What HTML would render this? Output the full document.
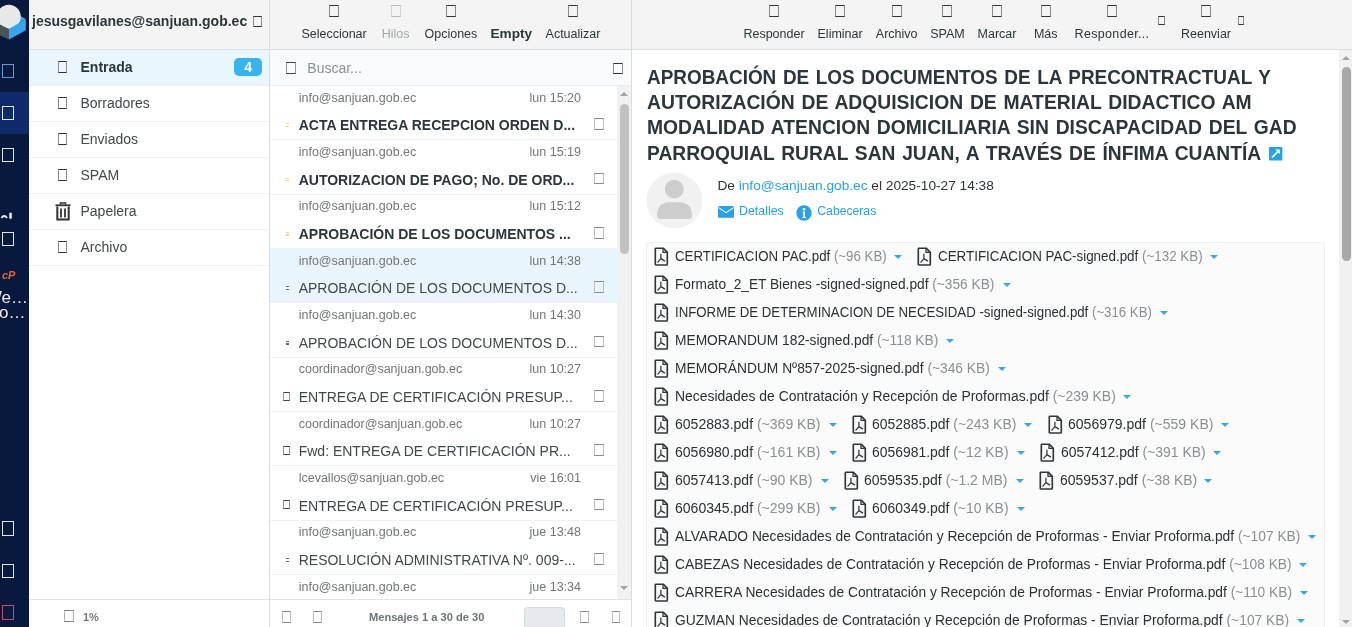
<!DOCTYPE html>
<html><head><meta charset="utf-8"><title>Roundcube</title>
<style>
*{box-sizing:border-box;margin:0;padding:0}
html,body{width:1352px;height:627px;overflow:hidden;background:#fff;font-family:"Liberation Sans",sans-serif;color:#2c363a}
.a{position:absolute}
.t{position:absolute;white-space:nowrap;line-height:0}
body{will-change:transform}
</style></head><body>
<div class="a" style="left:0px;top:0px;width:29px;height:627px;background:#09193d;"></div>
<div class="a" style="left:0px;top:92px;width:29px;height:42px;background:#0f2a6a;"></div>
<svg class="a" style="left:0;top:0" width="29" height="44" viewBox="0 0 29 44">
<polygon points="0,24.4 19.5,15.5 25.8,19 8.8,29" fill="#37a6ee"/>
<circle cx="8.8" cy="16.8" r="12" fill="#e8e8e8"/>
<polygon points="-1,24 8.8,29 9,39.5 -1,35" fill="#4b5456"/>
<polygon points="8.8,29 25.8,19 25.8,30.2 9,39.5" fill="#37a6ee"/>
</svg>
<div class="a" style="left:2.4px;top:64px;width:11.6px;height:14px;border:1.5px solid #5f9bd0;border-left-color:#5f9bd0;border-right-color:#5f9bd0;"></div>
<div class="a" style="left:2.4px;top:106px;width:11.6px;height:14px;border:1.5px solid #dfe6ee;border-left-color:#dfe6ee;border-right-color:#dfe6ee;"></div>
<div class="a" style="left:2.4px;top:148px;width:11.6px;height:14px;border:1.5px solid #dfe6ee;border-left-color:#dfe6ee;border-right-color:#dfe6ee;"></div>
<div class="a" style="left:2.4px;top:232px;width:11.6px;height:14px;border:1.5px solid #dfe6ee;border-left-color:#dfe6ee;border-right-color:#dfe6ee;"></div>
<div class="a" style="left:2.4px;top:521px;width:11.6px;height:15px;border:1.5px solid #dfe6ee;border-left-color:#dfe6ee;border-right-color:#dfe6ee;"></div>
<div class="a" style="left:2.4px;top:564px;width:11.6px;height:14px;border:1.5px solid #dfe6ee;border-left-color:#dfe6ee;border-right-color:#dfe6ee;"></div>
<div class="a" style="left:2.4px;top:605px;width:11.6px;height:15px;border:1.5px solid #c0506a;border-left-color:#c0506a;border-right-color:#c0506a;"></div>
<svg class="a" style="left:0;top:210px" width="16" height="12" viewBox="0 210 16 12"><path d="M1.5,218 Q4.2,214.2 7,218" fill="none" stroke="#eef" stroke-width="2"/><rect x="9.3" y="212.8" width="2.5" height="5.9" fill="#eef"/></svg>
<div class="t" style="left:2px;top:275.0px;font-size:11px;color:#e8662e;font-weight:bold;"><i>cP</i></div>
<div class="t" style="left:-14.2px;top:298.0px;font-size:17px;color:#f0f0f0;">We…</div>
<div class="t" style="left:-1px;top:312.5px;font-size:17px;color:#f0f0f0;">o…</div>
<div class="a" style="left:29px;top:0px;width:240px;height:49px;background:#f4f4f4;"></div>
<div class="a" style="left:29px;top:49px;width:240px;height:1px;background:#d6dde0;"></div>
<div class="t" style="left:32px;top:21.0px;font-size:14px;color:#2c363a;font-weight:bold;">jesusgavilanes@sanjuan.gob.ec</div>
<div class="a" style="left:252.6px;top:15.7px;width:9.200000000000017px;height:11.100000000000001px;border:1.4px solid #333;border-left-color:#8a8a8a;border-right-color:#8a8a8a;"></div>
<div class="a" style="left:29px;top:50px;width:240px;height:35px;background:#eaf6fd;"></div>
<div class="a" style="left:29px;top:84.5px;width:240px;height:1.0px;background:#eef1f2;"></div>
<div class="a" style="left:58px;top:61.2px;width:8.799999999999997px;height:11.700000000000003px;border:1.4px solid #333;border-left-color:#8f8f8f;border-right-color:#8f8f8f;"></div>
<div class="t" style="left:80.5px;top:67.0px;font-size:14px;color:#2c363a;font-weight:bold;">Entrada</div>
<div class="a" style="left:29px;top:120.5px;width:240px;height:1.0px;background:#eef1f2;"></div>
<div class="a" style="left:58px;top:97.2px;width:8.799999999999997px;height:11.700000000000003px;border:1.4px solid #333;border-left-color:#8f8f8f;border-right-color:#8f8f8f;"></div>
<div class="t" style="left:80.5px;top:103.0px;font-size:14px;color:#41484b;">Borradores</div>
<div class="a" style="left:29px;top:156.5px;width:240px;height:1.0px;background:#eef1f2;"></div>
<div class="a" style="left:58px;top:133.2px;width:8.799999999999997px;height:11.700000000000017px;border:1.4px solid #333;border-left-color:#8f8f8f;border-right-color:#8f8f8f;"></div>
<div class="t" style="left:80.5px;top:139.0px;font-size:14px;color:#41484b;">Enviados</div>
<div class="a" style="left:29px;top:192.5px;width:240px;height:1.0px;background:#eef1f2;"></div>
<div class="a" style="left:58px;top:169.2px;width:8.799999999999997px;height:11.700000000000017px;border:1.4px solid #333;border-left-color:#8f8f8f;border-right-color:#8f8f8f;"></div>
<div class="t" style="left:80.5px;top:175.0px;font-size:14px;color:#41484b;">SPAM</div>
<div class="a" style="left:29px;top:228.5px;width:240px;height:1.0px;background:#eef1f2;"></div>
<svg class="a" style="left:55px;top:202px" width="16" height="19" viewBox="0 0 16 19">
<path d="M5.5,2.5 V1 H10.5 V2.5" fill="none" stroke="#333" stroke-width="1.6"/>
<path d="M0.5,3.3 H15.5" stroke="#333" stroke-width="1.8"/>
<path d="M2.3,4.5 V17.6 H13.7 V4.5" fill="none" stroke="#333" stroke-width="2"/>
<path d="M6,6.5 V15.5 M10,6.5 V15.5" stroke="#333" stroke-width="1.8"/>
</svg>
<div class="t" style="left:80.5px;top:211.0px;font-size:14px;color:#41484b;">Papelera</div>
<div class="a" style="left:29px;top:264.5px;width:240px;height:1.0px;background:#eef1f2;"></div>
<div class="a" style="left:58px;top:241.2px;width:8.799999999999997px;height:11.700000000000017px;border:1.4px solid #333;border-left-color:#8f8f8f;border-right-color:#8f8f8f;"></div>
<div class="t" style="left:80.5px;top:247.0px;font-size:14px;color:#41484b;">Archivo</div>
<div class="a" style="left:234.3px;top:58.3px;width:27.399999999999977px;height:18.200000000000003px;background:#37b4ea;border-radius:5px"></div>
<div class="t" style="left:98.19999999999999px;width:300px;text-align:center;top:67.3px;font-size:14px;color:#fff;font-weight:bold;">4</div>
<div class="a" style="left:29px;top:599px;width:240px;height:1px;background:#dfe3e5;"></div>
<div class="a" style="left:64px;top:610px;width:9.5px;height:11.799999999999955px;border:1.3px solid #777;border-left-color:#b4b4b4;border-right-color:#b4b4b4;"></div>
<div class="t" style="left:83px;top:617.0px;font-size:11px;color:#777;font-weight:bold;">1%</div>
<div class="a" style="left:269px;top:0px;width:1px;height:627px;background:#dcdcdc;"></div>
<div class="a" style="left:270px;top:0px;width:361px;height:49px;background:#f4f4f4;"></div>
<div class="a" style="left:270px;top:49px;width:361px;height:1px;background:#d6dde0;"></div>
<div class="a" style="left:329.1px;top:5.2px;width:10.0px;height:11.400000000000002px;border:1.4px solid #333;border-left-color:#8a8a8a;border-right-color:#8a8a8a;"></div>
<div class="t" style="left:184.10000000000002px;width:300px;text-align:center;top:33.7px;font-size:12.5px;color:#2c363a;">Seleccionar</div>
<div class="a" style="left:390.7px;top:5.2px;width:10.0px;height:11.400000000000002px;border:1.4px solid #b5b9bb;border-left-color:#d1d4d5;border-right-color:#d1d4d5;"></div>
<div class="t" style="left:245.7px;width:300px;text-align:center;top:33.7px;font-size:12.5px;color:#a3a9ab;">Hilos</div>
<div class="a" style="left:445.9px;top:5.2px;width:10.0px;height:11.400000000000002px;border:1.4px solid #333;border-left-color:#8a8a8a;border-right-color:#8a8a8a;"></div>
<div class="t" style="left:300.9px;width:300px;text-align:center;top:33.7px;font-size:12.5px;color:#2c363a;">Opciones</div>
<div class="t" style="left:361.3px;width:300px;text-align:center;top:34.2px;font-size:13.6px;color:#2c363a;font-weight:bold;">Empty</div>
<div class="a" style="left:568px;top:5.2px;width:10px;height:11.400000000000002px;border:1.4px solid #333;border-left-color:#8a8a8a;border-right-color:#8a8a8a;"></div>
<div class="t" style="left:423px;width:300px;text-align:center;top:33.7px;font-size:12.5px;color:#2c363a;">Actualizar</div>
<div class="a" style="left:270px;top:50px;width:361px;height:35px;background:#f9fafb;"></div>
<div class="a" style="left:270px;top:85px;width:361px;height:1px;background:#e9edef;"></div>
<div class="a" style="left:286px;top:62.2px;width:9.5px;height:11.5px;border:1.4px solid #444;border-left-color:#959696;border-right-color:#959696;"></div>
<div class="t" style="left:307.3px;top:68.0px;font-size:14px;color:#8a9195;">Buscar...</div>
<div class="a" style="left:612.8px;top:63.2px;width:10.100000000000023px;height:10.899999999999991px;border:1.4px solid #333;border-left-color:#8c8d8d;border-right-color:#8c8d8d;"></div>
<div class="a" style="left:270px;top:139.2px;width:347px;height:1.0px;background:#eef1f2;"></div>
<div class="t" style="left:298.7px;top:97.67px;font-size:12.5px;color:#737677;">info@sanjuan.gob.ec</div>
<div class="t" style="left:-19px;width:600px;text-align:right;top:97.67px;font-size:12.5px;color:#737677;">lun 15:20</div>
<div class="t" style="left:298.7px;top:125.37px;font-size:14px;color:#2c363a;font-weight:bold;">ACTA ENTREGA RECEPCION ORDEN D...</div>
<div class="a" style="left:594.3px;top:118.27000000000001px;width:9.5px;height:11.799999999999983px;border:1.3px solid #888;border-left-color:#bebebe;border-right-color:#bebebe;"></div>
<div class="a" style="left:285.6px;top:123.17px;width:3.8999999999999773px;height:1.1000000000000085px;background:#efd48a;"></div>
<div class="a" style="left:285.6px;top:125.77000000000001px;width:3.8999999999999773px;height:1.0999999999999943px;background:#efd48a;"></div>
<div class="a" style="left:270px;top:193.52999999999997px;width:347px;height:1.0px;background:#eef1f2;"></div>
<div class="t" style="left:298.7px;top:152.0px;font-size:12.5px;color:#737677;">info@sanjuan.gob.ec</div>
<div class="t" style="left:-19px;width:600px;text-align:right;top:152.0px;font-size:12.5px;color:#737677;">lun 15:19</div>
<div class="t" style="left:298.7px;top:179.7px;font-size:14px;color:#2c363a;font-weight:bold;">AUTORIZACION DE PAGO; No. DE ORD...</div>
<div class="a" style="left:594.3px;top:172.6px;width:9.5px;height:11.799999999999983px;border:1.3px solid #888;border-left-color:#bebebe;border-right-color:#bebebe;"></div>
<div class="a" style="left:285.6px;top:177.5px;width:3.8999999999999773px;height:1.0999999999999943px;background:#efd48a;"></div>
<div class="a" style="left:285.6px;top:180.1px;width:3.8999999999999773px;height:1.0999999999999943px;background:#efd48a;"></div>
<div class="a" style="left:270px;top:247.86px;width:347px;height:1.0px;background:#eef1f2;"></div>
<div class="t" style="left:298.7px;top:206.33px;font-size:12.5px;color:#737677;">info@sanjuan.gob.ec</div>
<div class="t" style="left:-19px;width:600px;text-align:right;top:206.33px;font-size:12.5px;color:#737677;">lun 15:12</div>
<div class="t" style="left:298.7px;top:234.03px;font-size:14px;color:#2c363a;font-weight:bold;">APROBACIÓN DE LOS DOCUMENTOS ...</div>
<div class="a" style="left:594.3px;top:226.93px;width:9.5px;height:11.800000000000011px;border:1.3px solid #888;border-left-color:#bebebe;border-right-color:#bebebe;"></div>
<div class="a" style="left:285.6px;top:231.82999999999998px;width:3.8999999999999773px;height:1.1000000000000227px;background:#efd48a;"></div>
<div class="a" style="left:285.6px;top:234.43px;width:3.8999999999999773px;height:1.0999999999999943px;background:#efd48a;"></div>
<div class="a" style="left:270px;top:248.36px;width:347px;height:54.329999999999984px;background:#e9f5fc;"></div>
<div class="a" style="left:270px;top:302.19px;width:347px;height:1.0px;background:#eef1f2;"></div>
<div class="t" style="left:298.7px;top:260.66px;font-size:12.5px;color:#737677;">info@sanjuan.gob.ec</div>
<div class="t" style="left:-19px;width:600px;text-align:right;top:260.66px;font-size:12.5px;color:#737677;">lun 14:38</div>
<div class="t" style="left:298.7px;top:288.36px;font-size:14px;color:#41484b;">APROBACIÓN DE LOS DOCUMENTOS D...</div>
<div class="a" style="left:594.3px;top:281.26px;width:9.5px;height:11.800000000000011px;border:1.3px solid #888;border-left-color:#bebebe;border-right-color:#bebebe;"></div>
<div class="a" style="left:285.9px;top:286.26px;width:3.400000000000034px;height:1.2000000000000455px;background:#666;"></div>
<div class="a" style="left:285.9px;top:289.06px;width:3.400000000000034px;height:1.1999999999999886px;background:#666;"></div>
<div class="a" style="left:270px;top:356.52px;width:347px;height:1.0px;background:#eef1f2;"></div>
<div class="t" style="left:298.7px;top:314.99px;font-size:12.5px;color:#737677;">info@sanjuan.gob.ec</div>
<div class="t" style="left:-19px;width:600px;text-align:right;top:314.99px;font-size:12.5px;color:#737677;">lun 14:30</div>
<div class="t" style="left:298.7px;top:342.69px;font-size:14px;color:#41484b;">APROBACIÓN DE LOS DOCUMENTOS D...</div>
<div class="a" style="left:594.3px;top:335.59px;width:9.5px;height:11.800000000000011px;border:1.3px solid #888;border-left-color:#bebebe;border-right-color:#bebebe;"></div>
<div class="a" style="left:285.9px;top:340.59px;width:3.400000000000034px;height:1.2000000000000455px;background:#666;"></div>
<div class="a" style="left:285.9px;top:343.39px;width:3.400000000000034px;height:1.1999999999999886px;background:#666;"></div>
<div class="a" style="left:270px;top:410.84999999999997px;width:347px;height:1.0px;background:#eef1f2;"></div>
<div class="t" style="left:298.7px;top:369.32px;font-size:12.5px;color:#737677;">coordinador@sanjuan.gob.ec</div>
<div class="t" style="left:-19px;width:600px;text-align:right;top:369.32px;font-size:12.5px;color:#737677;">lun 10:27</div>
<div class="t" style="left:298.7px;top:397.02px;font-size:14px;color:#41484b;">ENTREGA DE CERTIFICACIÓN PRESUP...</div>
<div class="a" style="left:594.3px;top:389.91999999999996px;width:9.5px;height:11.800000000000011px;border:1.3px solid #888;border-left-color:#bebebe;border-right-color:#bebebe;"></div>
<div class="a" style="left:283px;top:391.52px;width:7.399999999999977px;height:9.0px;border:1.2px solid #444;border-left-color:#989898;border-right-color:#989898;"></div>
<div class="a" style="left:270px;top:465.18px;width:347px;height:1.0px;background:#eef1f2;"></div>
<div class="t" style="left:298.7px;top:423.65000000000003px;font-size:12.5px;color:#737677;">coordinador@sanjuan.gob.ec</div>
<div class="t" style="left:-19px;width:600px;text-align:right;top:423.65000000000003px;font-size:12.5px;color:#737677;">lun 10:27</div>
<div class="t" style="left:298.7px;top:451.35px;font-size:14px;color:#41484b;">Fwd: ENTREGA DE CERTIFICACIÓN PR...</div>
<div class="a" style="left:594.3px;top:444.25px;width:9.5px;height:11.800000000000011px;border:1.3px solid #888;border-left-color:#bebebe;border-right-color:#bebebe;"></div>
<div class="a" style="left:283px;top:445.85px;width:7.399999999999977px;height:9.0px;border:1.2px solid #444;border-left-color:#989898;border-right-color:#989898;"></div>
<div class="a" style="left:270px;top:519.51px;width:347px;height:1.0px;background:#eef1f2;"></div>
<div class="t" style="left:298.7px;top:477.98px;font-size:12.5px;color:#737677;">lcevallos@sanjuan.gob.ec</div>
<div class="t" style="left:-19px;width:600px;text-align:right;top:477.98px;font-size:12.5px;color:#737677;">vie 16:01</div>
<div class="t" style="left:298.7px;top:505.68px;font-size:14px;color:#41484b;">ENTREGA DE CERTIFICACIÓN PRESUP...</div>
<div class="a" style="left:594.3px;top:498.58px;width:9.5px;height:11.800000000000011px;border:1.3px solid #888;border-left-color:#bebebe;border-right-color:#bebebe;"></div>
<div class="a" style="left:283px;top:500.18px;width:7.399999999999977px;height:9.0px;border:1.2px solid #444;border-left-color:#989898;border-right-color:#989898;"></div>
<div class="a" style="left:270px;top:573.84px;width:347px;height:1.0px;background:#eef1f2;"></div>
<div class="t" style="left:298.7px;top:532.31px;font-size:12.5px;color:#737677;">info@sanjuan.gob.ec</div>
<div class="t" style="left:-19px;width:600px;text-align:right;top:532.31px;font-size:12.5px;color:#737677;">jue 13:48</div>
<div class="t" style="left:298.7px;top:560.01px;font-size:14px;color:#41484b;">RESOLUCIÓN ADMINISTRATIVA Nº. 009-...</div>
<div class="a" style="left:594.3px;top:552.91px;width:9.5px;height:11.800000000000068px;border:1.3px solid #888;border-left-color:#bebebe;border-right-color:#bebebe;"></div>
<div class="a" style="left:285.9px;top:557.91px;width:3.400000000000034px;height:1.2000000000000455px;background:#666;"></div>
<div class="a" style="left:285.9px;top:560.71px;width:3.400000000000034px;height:1.1999999999999318px;background:#666;"></div>
<div class="a" style="left:270px;top:628.17px;width:347px;height:1.0px;background:#eef1f2;"></div>
<div class="t" style="left:298.7px;top:586.6399999999999px;font-size:12.5px;color:#737677;">info@sanjuan.gob.ec</div>
<div class="t" style="left:-19px;width:600px;text-align:right;top:586.6399999999999px;font-size:12.5px;color:#737677;">jue 13:34</div>
<div class="a" style="left:617px;top:86px;width:14px;height:513px;background:#f1f1f1;"></div>
<div class="a" style="left:619.8px;top:104px;width:8.900000000000091px;height:150px;background:#c1c1c1;border-radius:5px"></div>
<svg class="a" style="left:619px;top:90px" width="10" height="8"><polygon points="1,6 5,2 9,6" fill="#a3a3a3"/></svg>
<svg class="a" style="left:619px;top:584px" width="10" height="8"><polygon points="1,2 5,6 9,2" fill="#a3a3a3"/></svg>
<div class="a" style="left:270px;top:599px;width:361px;height:1px;background:#dfe3e5;"></div>
<div class="a" style="left:270px;top:600px;width:361px;height:27px;background:#fff;"></div>
<div class="a" style="left:282.3px;top:611.1px;width:8.699999999999989px;height:11.799999999999955px;border:1.3px solid #888;border-left-color:#bebebe;border-right-color:#bebebe;"></div>
<div class="a" style="left:313.2px;top:611.1px;width:8.800000000000011px;height:11.799999999999955px;border:1.3px solid #888;border-left-color:#bebebe;border-right-color:#bebebe;"></div>
<div class="t" style="left:369px;top:617.0px;font-size:11.1px;color:#6c7478;font-weight:bold;">Mensajes 1 a 30 de 30</div>
<div class="a" style="left:524px;top:606.5px;width:41px;height:23.5px;background:#e6eaed;border:1px solid #d5dadd;border-radius:4px"></div>
<div class="a" style="left:580px;top:611.1px;width:8.799999999999955px;height:11.799999999999955px;border:1.3px solid #888;border-left-color:#bebebe;border-right-color:#bebebe;"></div>
<div class="a" style="left:611.5px;top:611.1px;width:8.799999999999955px;height:11.799999999999955px;border:1.3px solid #888;border-left-color:#bebebe;border-right-color:#bebebe;"></div>
<div class="a" style="left:631px;top:0px;width:1px;height:627px;background:#dcdcdc;"></div>
<div class="a" style="left:632px;top:0px;width:720px;height:49px;background:#f4f4f4;"></div>
<div class="a" style="left:632px;top:49px;width:720px;height:1px;background:#d6dde0;"></div>
<div class="a" style="left:769px;top:5.2px;width:10px;height:11.400000000000002px;border:1.4px solid #333;border-left-color:#8a8a8a;border-right-color:#8a8a8a;"></div>
<div class="t" style="left:624px;width:300px;text-align:center;top:33.7px;font-size:12.5px;color:#2c363a;">Responder</div>
<div class="a" style="left:835.1px;top:5.2px;width:10.0px;height:11.400000000000002px;border:1.4px solid #333;border-left-color:#8a8a8a;border-right-color:#8a8a8a;"></div>
<div class="t" style="left:690.1px;width:300px;text-align:center;top:33.7px;font-size:12.5px;color:#2c363a;">Eliminar</div>
<div class="a" style="left:891.7px;top:5.2px;width:10.0px;height:11.400000000000002px;border:1.4px solid #333;border-left-color:#8a8a8a;border-right-color:#8a8a8a;"></div>
<div class="t" style="left:746.7px;width:300px;text-align:center;top:33.7px;font-size:12.5px;color:#2c363a;">Archivo</div>
<div class="a" style="left:942.4px;top:5.2px;width:10.0px;height:11.400000000000002px;border:1.4px solid #333;border-left-color:#8a8a8a;border-right-color:#8a8a8a;"></div>
<div class="t" style="left:797.4px;width:300px;text-align:center;top:33.7px;font-size:12.5px;color:#2c363a;">SPAM</div>
<div class="a" style="left:992px;top:5.2px;width:10px;height:11.400000000000002px;border:1.4px solid #333;border-left-color:#8a8a8a;border-right-color:#8a8a8a;"></div>
<div class="t" style="left:847px;width:300px;text-align:center;top:33.7px;font-size:12.5px;color:#2c363a;">Marcar</div>
<div class="a" style="left:1040.7px;top:5.2px;width:10.0px;height:11.400000000000002px;border:1.4px solid #333;border-left-color:#8a8a8a;border-right-color:#8a8a8a;"></div>
<div class="t" style="left:895.7px;width:300px;text-align:center;top:33.7px;font-size:12.5px;color:#2c363a;">Más</div>
<div class="a" style="left:1107px;top:5.2px;width:10px;height:11.400000000000002px;border:1.4px solid #333;border-left-color:#8a8a8a;border-right-color:#8a8a8a;"></div>
<div class="t" style="left:962px;width:300px;text-align:center;top:33.7px;font-size:12.5px;color:#2c363a;letter-spacing:0.33px">Responder...</div>
<div class="a" style="left:1201px;top:5.2px;width:10px;height:11.400000000000002px;border:1.4px solid #333;border-left-color:#8a8a8a;border-right-color:#8a8a8a;"></div>
<div class="t" style="left:1056px;width:300px;text-align:center;top:33.7px;font-size:12.5px;color:#2c363a;">Reenviar</div>
<div class="a" style="left:1158px;top:16px;width:6.7000000000000455px;height:8.5px;border:1.3px solid #333;border-left-color:#8a8a8a;border-right-color:#8a8a8a;"></div>
<div class="a" style="left:1237.5px;top:16px;width:6.2000000000000455px;height:8.5px;border:1.3px solid #333;border-left-color:#8a8a8a;border-right-color:#8a8a8a;"></div>
<div class="t" style="left:646.8px;top:76.5px;font-size:20.5px;color:#2c363a;font-weight:bold;word-spacing:1.5px;transform:scaleX(0.9227);transform-origin:0 0">APROBACIÓN DE LOS DOCUMENTOS DE LA PRECONTRACTUAL Y</div>
<div class="t" style="left:646.8px;top:101.5px;font-size:20.5px;color:#2c363a;font-weight:bold;word-spacing:1.5px;transform:scaleX(0.9421);transform-origin:0 0">AUTORIZACIÓN DE ADQUISICION DE MATERIAL DIDACTICO AM</div>
<div class="t" style="left:646.8px;top:126.5px;font-size:20.5px;color:#2c363a;font-weight:bold;word-spacing:1.5px;transform:scaleX(0.9403);transform-origin:0 0">MODALIDAD ATENCION DOMICILIARIA SIN DISCAPACIDAD DEL GAD</div>
<div class="t" style="left:646.8px;top:152.5px;font-size:20.5px;color:#2c363a;font-weight:bold;word-spacing:1.5px;transform:scaleX(0.9375);transform-origin:0 0">PARROQUIAL RURAL SAN JUAN, A TRAVÉS DE ÍNFIMA CUANTÍA</div>
<svg class="a" style="left:1269.3px;top:147.3px" width="13.4" height="13.5" viewBox="0 0 13.4 13.5">
<rect x="0" y="0" width="13.4" height="13.5" rx="1.2" fill="#22a3ea"/>
<path d="M3,10.5 L9.6,3.9" fill="none" stroke="#fff" stroke-width="1.7"/>
<path d="M6.2,2.6 H10.8 V7.2 Z" fill="#fff"/>
</svg>
<svg class="a" style="left:646px;top:172px" width="57" height="57" viewBox="0 0 57 57">
<circle cx="28.5" cy="28.5" r="28" fill="#f1f1f1"/>
<circle cx="28.3" cy="17.2" r="9.4" fill="#cdcdcd"/>
<path d="M11,43.5 C11,35 16,30.2 23,30.2 H34 C41,30.2 46,35 46,43.5 Q46,47 42.5,47 H14.5 Q11,47 11,43.5 Z" fill="#cdcdcd"/>
</svg>
<div class="t" style="left:717.4px;top:185.7px;font-size:13.7px;color:#2c363a;">De <span style="color:#2aa0e6">info@sanjuan.gob.ec</span> el 2025-10-27 14:38</div>
<svg class="a" style="left:718px;top:206.4px" width="16.2" height="11.8" viewBox="0 0 16.2 11.8">
<rect x="0" y="0" width="16.2" height="11.8" rx="1.3" fill="#2aa0e6"/>
<path d="M0.6,1.6 L8.1,6.6 L15.6,1.6" fill="none" stroke="#fff" stroke-width="1.1"/>
</svg>
<div class="t" style="left:739px;top:210.9px;font-size:12.4px;color:#2aa0e6;">Detalles</div>
<svg class="a" style="left:796px;top:205px" width="16" height="16" viewBox="0 0 16 16">
<circle cx="8" cy="8" r="7.7" fill="#2aa0e6"/>
<circle cx="8" cy="4.3" r="1.3" fill="#fff"/>
<path d="M6.3,6.5 H9 V12 H10 V13 H6.3 V12 H7.3 V7.5 H6.3 Z" fill="#fff"/>
</svg>
<div class="t" style="left:817.3px;top:210.9px;font-size:12.2px;color:#2aa0e6;">Cabeceras</div>
<div class="a" style="left:646px;top:242px;width:679px;height:398px;background:#fbfbfb;border:1px solid #eceef0;border-radius:3px"></div>
<div class="a" style="left:654.4px;top:247px;width:15px;height:19px"><svg width="15" height="19" viewBox="0 0 15 19" style="position:absolute;left:0;top:0">
<path d="M1.3,1.9 Q1.3,1.2 2,1.2 H9.2 L13.3,5.3 V17.2 Q13.3,18 12.5,18 H2 Q1.3,18 1.3,17.2 Z" fill="none" stroke="#30363a" stroke-width="1.65" stroke-linejoin="round"/>
<path d="M9,1.3 V5.4 H13.2" fill="none" stroke="#30363a" stroke-width="1.3"/>
<path d="M6.9,7.2 V11.6 L3.9,15.2 M6.9,11.6 L10.6,13.9" fill="none" stroke="#30363a" stroke-width="1.25" stroke-linecap="round"/>
</svg></div>
<div class="t" style="left:675.0px;top:256.2px;font-size:14px;transform:scaleX(0.9487);transform-origin:0 0;color:#2a3033">CERTIFICACION PAC.pdf <span style="color:#8a8f92">(~96 KB)</span></div>
<div class="a" style="left:894.1px;top:255.4px;width:0;height:0;border-left:4px solid transparent;border-right:4px solid transparent;border-top:4px solid #37a6ee"></div>
<div class="a" style="left:917.4px;top:247px;width:15px;height:19px"><svg width="15" height="19" viewBox="0 0 15 19" style="position:absolute;left:0;top:0">
<path d="M1.3,1.9 Q1.3,1.2 2,1.2 H9.2 L13.3,5.3 V17.2 Q13.3,18 12.5,18 H2 Q1.3,18 1.3,17.2 Z" fill="none" stroke="#30363a" stroke-width="1.65" stroke-linejoin="round"/>
<path d="M9,1.3 V5.4 H13.2" fill="none" stroke="#30363a" stroke-width="1.3"/>
<path d="M6.9,7.2 V11.6 L3.9,15.2 M6.9,11.6 L10.6,13.9" fill="none" stroke="#30363a" stroke-width="1.25" stroke-linecap="round"/>
</svg></div>
<div class="t" style="left:938.0px;top:256.2px;font-size:14px;transform:scaleX(0.9557);transform-origin:0 0;color:#2a3033">CERTIFICACION PAC-signed.pdf <span style="color:#8a8f92">(~132 KB)</span></div>
<div class="a" style="left:1210.2px;top:255.4px;width:0;height:0;border-left:4px solid transparent;border-right:4px solid transparent;border-top:4px solid #37a6ee"></div>
<div class="a" style="left:654.4px;top:275px;width:15px;height:19px"><svg width="15" height="19" viewBox="0 0 15 19" style="position:absolute;left:0;top:0">
<path d="M1.3,1.9 Q1.3,1.2 2,1.2 H9.2 L13.3,5.3 V17.2 Q13.3,18 12.5,18 H2 Q1.3,18 1.3,17.2 Z" fill="none" stroke="#30363a" stroke-width="1.65" stroke-linejoin="round"/>
<path d="M9,1.3 V5.4 H13.2" fill="none" stroke="#30363a" stroke-width="1.3"/>
<path d="M6.9,7.2 V11.6 L3.9,15.2 M6.9,11.6 L10.6,13.9" fill="none" stroke="#30363a" stroke-width="1.25" stroke-linecap="round"/>
</svg></div>
<div class="t" style="left:675.0px;top:284.2px;font-size:14px;transform:scaleX(0.9791);transform-origin:0 0;color:#2a3033">Formato_2_ET Bienes -signed-signed.pdf <span style="color:#8a8f92">(~356 KB)</span></div>
<div class="a" style="left:1002.5px;top:283.4px;width:0;height:0;border-left:4px solid transparent;border-right:4px solid transparent;border-top:4px solid #37a6ee"></div>
<div class="a" style="left:654.4px;top:303px;width:15px;height:19px"><svg width="15" height="19" viewBox="0 0 15 19" style="position:absolute;left:0;top:0">
<path d="M1.3,1.9 Q1.3,1.2 2,1.2 H9.2 L13.3,5.3 V17.2 Q13.3,18 12.5,18 H2 Q1.3,18 1.3,17.2 Z" fill="none" stroke="#30363a" stroke-width="1.65" stroke-linejoin="round"/>
<path d="M9,1.3 V5.4 H13.2" fill="none" stroke="#30363a" stroke-width="1.3"/>
<path d="M6.9,7.2 V11.6 L3.9,15.2 M6.9,11.6 L10.6,13.9" fill="none" stroke="#30363a" stroke-width="1.25" stroke-linecap="round"/>
</svg></div>
<div class="t" style="left:675.0px;top:312.2px;font-size:14px;transform:scaleX(0.9453);transform-origin:0 0;color:#2a3033">INFORME DE DETERMINACION DE NECESIDAD -signed-signed.pdf <span style="color:#8a8f92">(~316 KB)</span></div>
<div class="a" style="left:1160px;top:311.4px;width:0;height:0;border-left:4px solid transparent;border-right:4px solid transparent;border-top:4px solid #37a6ee"></div>
<div class="a" style="left:654.4px;top:331px;width:15px;height:19px"><svg width="15" height="19" viewBox="0 0 15 19" style="position:absolute;left:0;top:0">
<path d="M1.3,1.9 Q1.3,1.2 2,1.2 H9.2 L13.3,5.3 V17.2 Q13.3,18 12.5,18 H2 Q1.3,18 1.3,17.2 Z" fill="none" stroke="#30363a" stroke-width="1.65" stroke-linejoin="round"/>
<path d="M9,1.3 V5.4 H13.2" fill="none" stroke="#30363a" stroke-width="1.3"/>
<path d="M6.9,7.2 V11.6 L3.9,15.2 M6.9,11.6 L10.6,13.9" fill="none" stroke="#30363a" stroke-width="1.25" stroke-linecap="round"/>
</svg></div>
<div class="t" style="left:675.0px;top:340.2px;font-size:14px;transform:scaleX(0.9833);transform-origin:0 0;color:#2a3033">MEMORANDUM 182-signed.pdf <span style="color:#8a8f92">(~118 KB)</span></div>
<div class="a" style="left:945.9px;top:339.4px;width:0;height:0;border-left:4px solid transparent;border-right:4px solid transparent;border-top:4px solid #37a6ee"></div>
<div class="a" style="left:654.4px;top:359px;width:15px;height:19px"><svg width="15" height="19" viewBox="0 0 15 19" style="position:absolute;left:0;top:0">
<path d="M1.3,1.9 Q1.3,1.2 2,1.2 H9.2 L13.3,5.3 V17.2 Q13.3,18 12.5,18 H2 Q1.3,18 1.3,17.2 Z" fill="none" stroke="#30363a" stroke-width="1.65" stroke-linejoin="round"/>
<path d="M9,1.3 V5.4 H13.2" fill="none" stroke="#30363a" stroke-width="1.3"/>
<path d="M6.9,7.2 V11.6 L3.9,15.2 M6.9,11.6 L10.6,13.9" fill="none" stroke="#30363a" stroke-width="1.25" stroke-linecap="round"/>
</svg></div>
<div class="t" style="left:675.0px;top:368.2px;font-size:14px;transform:scaleX(0.9842);transform-origin:0 0;color:#2a3033">MEMORÁNDUM Nº857-2025-signed.pdf <span style="color:#8a8f92">(~346 KB)</span></div>
<div class="a" style="left:997.9px;top:367.4px;width:0;height:0;border-left:4px solid transparent;border-right:4px solid transparent;border-top:4px solid #37a6ee"></div>
<div class="a" style="left:654.4px;top:387px;width:15px;height:19px"><svg width="15" height="19" viewBox="0 0 15 19" style="position:absolute;left:0;top:0">
<path d="M1.3,1.9 Q1.3,1.2 2,1.2 H9.2 L13.3,5.3 V17.2 Q13.3,18 12.5,18 H2 Q1.3,18 1.3,17.2 Z" fill="none" stroke="#30363a" stroke-width="1.65" stroke-linejoin="round"/>
<path d="M9,1.3 V5.4 H13.2" fill="none" stroke="#30363a" stroke-width="1.3"/>
<path d="M6.9,7.2 V11.6 L3.9,15.2 M6.9,11.6 L10.6,13.9" fill="none" stroke="#30363a" stroke-width="1.25" stroke-linecap="round"/>
</svg></div>
<div class="t" style="left:675.0px;top:396.2px;font-size:14px;transform:scaleX(0.9946);transform-origin:0 0;color:#2a3033">Necesidades de Contratación y Recepción de Proformas.pdf <span style="color:#8a8f92">(~239 KB)</span></div>
<div class="a" style="left:1123.4px;top:395.4px;width:0;height:0;border-left:4px solid transparent;border-right:4px solid transparent;border-top:4px solid #37a6ee"></div>
<div class="a" style="left:654.4px;top:415px;width:15px;height:19px"><svg width="15" height="19" viewBox="0 0 15 19" style="position:absolute;left:0;top:0">
<path d="M1.3,1.9 Q1.3,1.2 2,1.2 H9.2 L13.3,5.3 V17.2 Q13.3,18 12.5,18 H2 Q1.3,18 1.3,17.2 Z" fill="none" stroke="#30363a" stroke-width="1.65" stroke-linejoin="round"/>
<path d="M9,1.3 V5.4 H13.2" fill="none" stroke="#30363a" stroke-width="1.3"/>
<path d="M6.9,7.2 V11.6 L3.9,15.2 M6.9,11.6 L10.6,13.9" fill="none" stroke="#30363a" stroke-width="1.25" stroke-linecap="round"/>
</svg></div>
<div class="t" style="left:675.0px;top:424.2px;font-size:14px;transform:scaleX(1.0023);transform-origin:0 0;color:#2a3033">6052883.pdf <span style="color:#8a8f92">(~369 KB)</span></div>
<div class="a" style="left:828.5px;top:423.4px;width:0;height:0;border-left:4px solid transparent;border-right:4px solid transparent;border-top:4px solid #37a6ee"></div>
<div class="a" style="left:851.7px;top:415px;width:15px;height:19px"><svg width="15" height="19" viewBox="0 0 15 19" style="position:absolute;left:0;top:0">
<path d="M1.3,1.9 Q1.3,1.2 2,1.2 H9.2 L13.3,5.3 V17.2 Q13.3,18 12.5,18 H2 Q1.3,18 1.3,17.2 Z" fill="none" stroke="#30363a" stroke-width="1.65" stroke-linejoin="round"/>
<path d="M9,1.3 V5.4 H13.2" fill="none" stroke="#30363a" stroke-width="1.3"/>
<path d="M6.9,7.2 V11.6 L3.9,15.2 M6.9,11.6 L10.6,13.9" fill="none" stroke="#30363a" stroke-width="1.25" stroke-linecap="round"/>
</svg></div>
<div class="t" style="left:872.3000000000001px;top:424.2px;font-size:14px;transform:scaleX(0.9940);transform-origin:0 0;color:#2a3033">6052885.pdf <span style="color:#8a8f92">(~243 KB)</span></div>
<div class="a" style="left:1024.3px;top:423.4px;width:0;height:0;border-left:4px solid transparent;border-right:4px solid transparent;border-top:4px solid #37a6ee"></div>
<div class="a" style="left:1047.6px;top:415px;width:15px;height:19px"><svg width="15" height="19" viewBox="0 0 15 19" style="position:absolute;left:0;top:0">
<path d="M1.3,1.9 Q1.3,1.2 2,1.2 H9.2 L13.3,5.3 V17.2 Q13.3,18 12.5,18 H2 Q1.3,18 1.3,17.2 Z" fill="none" stroke="#30363a" stroke-width="1.65" stroke-linejoin="round"/>
<path d="M9,1.3 V5.4 H13.2" fill="none" stroke="#30363a" stroke-width="1.3"/>
<path d="M6.9,7.2 V11.6 L3.9,15.2 M6.9,11.6 L10.6,13.9" fill="none" stroke="#30363a" stroke-width="1.25" stroke-linecap="round"/>
</svg></div>
<div class="t" style="left:1068.1999999999998px;top:424.2px;font-size:14px;transform:scaleX(1.0016);transform-origin:0 0;color:#2a3033">6056979.pdf <span style="color:#8a8f92">(~559 KB)</span></div>
<div class="a" style="left:1220.7px;top:423.4px;width:0;height:0;border-left:4px solid transparent;border-right:4px solid transparent;border-top:4px solid #37a6ee"></div>
<div class="a" style="left:654.4px;top:443px;width:15px;height:19px"><svg width="15" height="19" viewBox="0 0 15 19" style="position:absolute;left:0;top:0">
<path d="M1.3,1.9 Q1.3,1.2 2,1.2 H9.2 L13.3,5.3 V17.2 Q13.3,18 12.5,18 H2 Q1.3,18 1.3,17.2 Z" fill="none" stroke="#30363a" stroke-width="1.65" stroke-linejoin="round"/>
<path d="M9,1.3 V5.4 H13.2" fill="none" stroke="#30363a" stroke-width="1.3"/>
<path d="M6.9,7.2 V11.6 L3.9,15.2 M6.9,11.6 L10.6,13.9" fill="none" stroke="#30363a" stroke-width="1.25" stroke-linecap="round"/>
</svg></div>
<div class="t" style="left:675.0px;top:452.2px;font-size:14px;transform:scaleX(1.0023);transform-origin:0 0;color:#2a3033">6056980.pdf <span style="color:#8a8f92">(~161 KB)</span></div>
<div class="a" style="left:828.5px;top:451.4px;width:0;height:0;border-left:4px solid transparent;border-right:4px solid transparent;border-top:4px solid #37a6ee"></div>
<div class="a" style="left:851.7px;top:443px;width:15px;height:19px"><svg width="15" height="19" viewBox="0 0 15 19" style="position:absolute;left:0;top:0">
<path d="M1.3,1.9 Q1.3,1.2 2,1.2 H9.2 L13.3,5.3 V17.2 Q13.3,18 12.5,18 H2 Q1.3,18 1.3,17.2 Z" fill="none" stroke="#30363a" stroke-width="1.65" stroke-linejoin="round"/>
<path d="M9,1.3 V5.4 H13.2" fill="none" stroke="#30363a" stroke-width="1.3"/>
<path d="M6.9,7.2 V11.6 L3.9,15.2 M6.9,11.6 L10.6,13.9" fill="none" stroke="#30363a" stroke-width="1.25" stroke-linecap="round"/>
</svg></div>
<div class="t" style="left:872.3000000000001px;top:452.2px;font-size:14px;transform:scaleX(0.9936);transform-origin:0 0;color:#2a3033">6056981.pdf <span style="color:#8a8f92">(~12 KB)</span></div>
<div class="a" style="left:1016.6px;top:451.4px;width:0;height:0;border-left:4px solid transparent;border-right:4px solid transparent;border-top:4px solid #37a6ee"></div>
<div class="a" style="left:1039.9px;top:443px;width:15px;height:19px"><svg width="15" height="19" viewBox="0 0 15 19" style="position:absolute;left:0;top:0">
<path d="M1.3,1.9 Q1.3,1.2 2,1.2 H9.2 L13.3,5.3 V17.2 Q13.3,18 12.5,18 H2 Q1.3,18 1.3,17.2 Z" fill="none" stroke="#30363a" stroke-width="1.65" stroke-linejoin="round"/>
<path d="M9,1.3 V5.4 H13.2" fill="none" stroke="#30363a" stroke-width="1.3"/>
<path d="M6.9,7.2 V11.6 L3.9,15.2 M6.9,11.6 L10.6,13.9" fill="none" stroke="#30363a" stroke-width="1.25" stroke-linecap="round"/>
</svg></div>
<div class="t" style="left:1060.5px;top:452.2px;font-size:14px;transform:scaleX(0.9968);transform-origin:0 0;color:#2a3033">6057412.pdf <span style="color:#8a8f92">(~391 KB)</span></div>
<div class="a" style="left:1212.9px;top:451.4px;width:0;height:0;border-left:4px solid transparent;border-right:4px solid transparent;border-top:4px solid #37a6ee"></div>
<div class="a" style="left:654.4px;top:471px;width:15px;height:19px"><svg width="15" height="19" viewBox="0 0 15 19" style="position:absolute;left:0;top:0">
<path d="M1.3,1.9 Q1.3,1.2 2,1.2 H9.2 L13.3,5.3 V17.2 Q13.3,18 12.5,18 H2 Q1.3,18 1.3,17.2 Z" fill="none" stroke="#30363a" stroke-width="1.65" stroke-linejoin="round"/>
<path d="M9,1.3 V5.4 H13.2" fill="none" stroke="#30363a" stroke-width="1.3"/>
<path d="M6.9,7.2 V11.6 L3.9,15.2 M6.9,11.6 L10.6,13.9" fill="none" stroke="#30363a" stroke-width="1.25" stroke-linecap="round"/>
</svg></div>
<div class="t" style="left:675.0px;top:480.2px;font-size:14px;transform:scaleX(1.0009);transform-origin:0 0;color:#2a3033">6057413.pdf <span style="color:#8a8f92">(~90 KB)</span></div>
<div class="a" style="left:820.5px;top:479.4px;width:0;height:0;border-left:4px solid transparent;border-right:4px solid transparent;border-top:4px solid #37a6ee"></div>
<div class="a" style="left:843.7px;top:471px;width:15px;height:19px"><svg width="15" height="19" viewBox="0 0 15 19" style="position:absolute;left:0;top:0">
<path d="M1.3,1.9 Q1.3,1.2 2,1.2 H9.2 L13.3,5.3 V17.2 Q13.3,18 12.5,18 H2 Q1.3,18 1.3,17.2 Z" fill="none" stroke="#30363a" stroke-width="1.65" stroke-linejoin="round"/>
<path d="M9,1.3 V5.4 H13.2" fill="none" stroke="#30363a" stroke-width="1.3"/>
<path d="M6.9,7.2 V11.6 L3.9,15.2 M6.9,11.6 L10.6,13.9" fill="none" stroke="#30363a" stroke-width="1.25" stroke-linecap="round"/>
</svg></div>
<div class="t" style="left:864.3000000000001px;top:480.2px;font-size:14px;transform:scaleX(0.9986);transform-origin:0 0;color:#2a3033">6059535.pdf <span style="color:#8a8f92">(~1.2 MB)</span></div>
<div class="a" style="left:1015.5px;top:479.4px;width:0;height:0;border-left:4px solid transparent;border-right:4px solid transparent;border-top:4px solid #37a6ee"></div>
<div class="a" style="left:1039.2px;top:471px;width:15px;height:19px"><svg width="15" height="19" viewBox="0 0 15 19" style="position:absolute;left:0;top:0">
<path d="M1.3,1.9 Q1.3,1.2 2,1.2 H9.2 L13.3,5.3 V17.2 Q13.3,18 12.5,18 H2 Q1.3,18 1.3,17.2 Z" fill="none" stroke="#30363a" stroke-width="1.65" stroke-linejoin="round"/>
<path d="M9,1.3 V5.4 H13.2" fill="none" stroke="#30363a" stroke-width="1.3"/>
<path d="M6.9,7.2 V11.6 L3.9,15.2 M6.9,11.6 L10.6,13.9" fill="none" stroke="#30363a" stroke-width="1.25" stroke-linecap="round"/>
</svg></div>
<div class="t" style="left:1059.8px;top:480.2px;font-size:14px;transform:scaleX(0.9987);transform-origin:0 0;color:#2a3033">6059537.pdf <span style="color:#8a8f92">(~38 KB)</span></div>
<div class="a" style="left:1204px;top:479.4px;width:0;height:0;border-left:4px solid transparent;border-right:4px solid transparent;border-top:4px solid #37a6ee"></div>
<div class="a" style="left:654.4px;top:499px;width:15px;height:19px"><svg width="15" height="19" viewBox="0 0 15 19" style="position:absolute;left:0;top:0">
<path d="M1.3,1.9 Q1.3,1.2 2,1.2 H9.2 L13.3,5.3 V17.2 Q13.3,18 12.5,18 H2 Q1.3,18 1.3,17.2 Z" fill="none" stroke="#30363a" stroke-width="1.65" stroke-linejoin="round"/>
<path d="M9,1.3 V5.4 H13.2" fill="none" stroke="#30363a" stroke-width="1.3"/>
<path d="M6.9,7.2 V11.6 L3.9,15.2 M6.9,11.6 L10.6,13.9" fill="none" stroke="#30363a" stroke-width="1.25" stroke-linecap="round"/>
</svg></div>
<div class="t" style="left:675.0px;top:508.20000000000005px;font-size:14px;transform:scaleX(1.0023);transform-origin:0 0;color:#2a3033">6060345.pdf <span style="color:#8a8f92">(~299 KB)</span></div>
<div class="a" style="left:828.5px;top:507.4px;width:0;height:0;border-left:4px solid transparent;border-right:4px solid transparent;border-top:4px solid #37a6ee"></div>
<div class="a" style="left:851.7px;top:499px;width:15px;height:19px"><svg width="15" height="19" viewBox="0 0 15 19" style="position:absolute;left:0;top:0">
<path d="M1.3,1.9 Q1.3,1.2 2,1.2 H9.2 L13.3,5.3 V17.2 Q13.3,18 12.5,18 H2 Q1.3,18 1.3,17.2 Z" fill="none" stroke="#30363a" stroke-width="1.65" stroke-linejoin="round"/>
<path d="M9,1.3 V5.4 H13.2" fill="none" stroke="#30363a" stroke-width="1.3"/>
<path d="M6.9,7.2 V11.6 L3.9,15.2 M6.9,11.6 L10.6,13.9" fill="none" stroke="#30363a" stroke-width="1.25" stroke-linecap="round"/>
</svg></div>
<div class="t" style="left:872.3000000000001px;top:508.20000000000005px;font-size:14px;transform:scaleX(0.9936);transform-origin:0 0;color:#2a3033">6060349.pdf <span style="color:#8a8f92">(~10 KB)</span></div>
<div class="a" style="left:1016.6px;top:507.4px;width:0;height:0;border-left:4px solid transparent;border-right:4px solid transparent;border-top:4px solid #37a6ee"></div>
<div class="a" style="left:654.4px;top:527px;width:15px;height:19px"><svg width="15" height="19" viewBox="0 0 15 19" style="position:absolute;left:0;top:0">
<path d="M1.3,1.9 Q1.3,1.2 2,1.2 H9.2 L13.3,5.3 V17.2 Q13.3,18 12.5,18 H2 Q1.3,18 1.3,17.2 Z" fill="none" stroke="#30363a" stroke-width="1.65" stroke-linejoin="round"/>
<path d="M9,1.3 V5.4 H13.2" fill="none" stroke="#30363a" stroke-width="1.3"/>
<path d="M6.9,7.2 V11.6 L3.9,15.2 M6.9,11.6 L10.6,13.9" fill="none" stroke="#30363a" stroke-width="1.25" stroke-linecap="round"/>
</svg></div>
<div class="t" style="left:675.0px;top:536.2px;font-size:14px;transform:scaleX(0.9851);transform-origin:0 0;color:#2a3033">ALVARADO Necesidades de Contratación y Recepción de Proformas - Enviar Proforma.pdf <span style="color:#8a8f92">(~107 KB)</span></div>
<div class="a" style="left:1308.4px;top:535.4px;width:0;height:0;border-left:4px solid transparent;border-right:4px solid transparent;border-top:4px solid #37a6ee"></div>
<div class="a" style="left:654.4px;top:555px;width:15px;height:19px"><svg width="15" height="19" viewBox="0 0 15 19" style="position:absolute;left:0;top:0">
<path d="M1.3,1.9 Q1.3,1.2 2,1.2 H9.2 L13.3,5.3 V17.2 Q13.3,18 12.5,18 H2 Q1.3,18 1.3,17.2 Z" fill="none" stroke="#30363a" stroke-width="1.65" stroke-linejoin="round"/>
<path d="M9,1.3 V5.4 H13.2" fill="none" stroke="#30363a" stroke-width="1.3"/>
<path d="M6.9,7.2 V11.6 L3.9,15.2 M6.9,11.6 L10.6,13.9" fill="none" stroke="#30363a" stroke-width="1.25" stroke-linecap="round"/>
</svg></div>
<div class="t" style="left:675.0px;top:564.2px;font-size:14px;transform:scaleX(0.9850);transform-origin:0 0;color:#2a3033">CABEZAS Necesidades de Contratación y Recepción de Proformas - Enviar Proforma.pdf <span style="color:#8a8f92">(~108 KB)</span></div>
<div class="a" style="left:1299.4px;top:563.4px;width:0;height:0;border-left:4px solid transparent;border-right:4px solid transparent;border-top:4px solid #37a6ee"></div>
<div class="a" style="left:654.4px;top:583px;width:15px;height:19px"><svg width="15" height="19" viewBox="0 0 15 19" style="position:absolute;left:0;top:0">
<path d="M1.3,1.9 Q1.3,1.2 2,1.2 H9.2 L13.3,5.3 V17.2 Q13.3,18 12.5,18 H2 Q1.3,18 1.3,17.2 Z" fill="none" stroke="#30363a" stroke-width="1.65" stroke-linejoin="round"/>
<path d="M9,1.3 V5.4 H13.2" fill="none" stroke="#30363a" stroke-width="1.3"/>
<path d="M6.9,7.2 V11.6 L3.9,15.2 M6.9,11.6 L10.6,13.9" fill="none" stroke="#30363a" stroke-width="1.25" stroke-linecap="round"/>
</svg></div>
<div class="t" style="left:675.0px;top:592.2px;font-size:14px;transform:scaleX(0.9836);transform-origin:0 0;color:#2a3033">CARRERA Necesidades de Contratación y Recepción de Proformas - Enviar Proforma.pdf <span style="color:#8a8f92">(~110 KB)</span></div>
<div class="a" style="left:1299.8px;top:591.4px;width:0;height:0;border-left:4px solid transparent;border-right:4px solid transparent;border-top:4px solid #37a6ee"></div>
<div class="a" style="left:654.4px;top:611px;width:15px;height:19px"><svg width="15" height="19" viewBox="0 0 15 19" style="position:absolute;left:0;top:0">
<path d="M1.3,1.9 Q1.3,1.2 2,1.2 H9.2 L13.3,5.3 V17.2 Q13.3,18 12.5,18 H2 Q1.3,18 1.3,17.2 Z" fill="none" stroke="#30363a" stroke-width="1.65" stroke-linejoin="round"/>
<path d="M9,1.3 V5.4 H13.2" fill="none" stroke="#30363a" stroke-width="1.3"/>
<path d="M6.9,7.2 V11.6 L3.9,15.2 M6.9,11.6 L10.6,13.9" fill="none" stroke="#30363a" stroke-width="1.25" stroke-linecap="round"/>
</svg></div>
<div class="t" style="left:675.0px;top:620.2px;font-size:14px;transform:scaleX(0.9885);transform-origin:0 0;color:#2a3033">GUZMAN Necesidades de Contratación y Recepción de Proformas - Enviar Proforma.pdf <span style="color:#8a8f92">(~107 KB)</span></div>
<div class="a" style="left:1296.6px;top:619.4px;width:0;height:0;border-left:4px solid transparent;border-right:4px solid transparent;border-top:4px solid #37a6ee"></div>
<div class="a" style="left:1339px;top:50px;width:13px;height:577px;background:#f1f1f1;"></div>
<div class="a" style="left:1341.7px;top:66.8px;width:9.599999999999909px;height:194.7px;background:#a8a8a8;border-radius:5px"></div>
<svg class="a" style="left:1341px;top:54px" width="10" height="8"><polygon points="1,6 5,2 9,6" fill="#a3a3a3"/></svg>
<svg class="a" style="left:1341px;top:618px" width="10" height="8"><polygon points="1,2 5,6 9,2" fill="#a3a3a3"/></svg>
</body></html>
